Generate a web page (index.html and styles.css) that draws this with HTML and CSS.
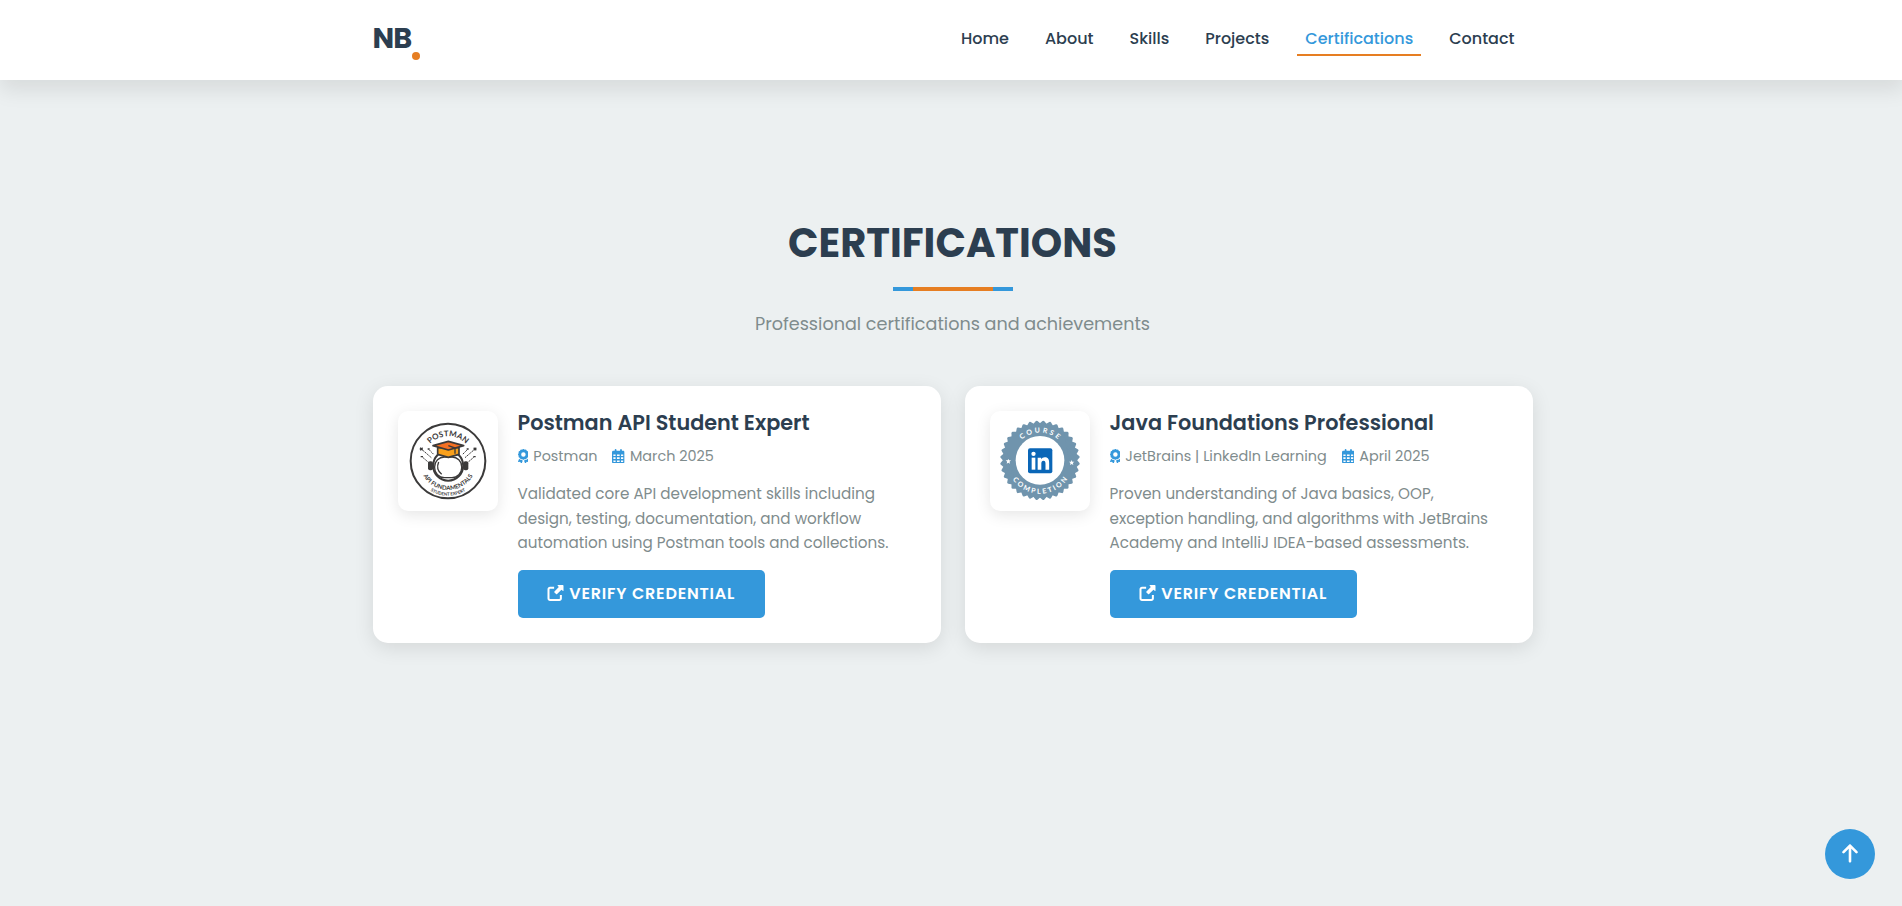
FILE: index.html
```html
<!DOCTYPE html>
<html lang="en">
<head>
<meta charset="utf-8">
<title>Certifications</title>
<link rel="stylesheet" href="styles.css">
</head>
<body>
<svg class="sprite" aria-hidden="true">
  <symbol id="award" viewBox="0 0 384 512"><path d="M173.8 5.5c11-7.3 25.4-7.3 36.4 0L228 17.2c6 3.9 13 5.8 20.1 5.4l21.3-1.3c13.2-.8 25.6 6.4 31.5 18.2l9.6 19.1c3.2 6.4 8.4 11.5 14.7 14.7L344.5 83c11.8 5.9 19 18.3 18.2 31.5l-1.3 21.3c-.4 7.1 1.5 14.2 5.4 20.1l11.8 17.8c7.3 11 7.3 25.4 0 36.4L366.8 228c-3.9 6-5.8 13-5.4 20.1l1.3 21.3c.8 13.2-6.4 25.6-18.2 31.5l-19.1 9.6c-6.4 3.2-11.5 8.4-14.7 14.7L301 344.5c-5.9 11.8-18.3 19-31.5 18.2l-21.3-1.3c-7.1-.4-14.2 1.5-20.1 5.4l-17.8 11.8c-11 7.3-25.4 7.3-36.4 0L156 366.8c-6-3.9-13-5.8-20.1-5.4l-21.3 1.3c-13.2 .8-25.6-6.4-31.5-18.2l-9.6-19.1c-3.2-6.4-8.4-11.5-14.7-14.7L39.5 301c-11.8-5.9-19-18.3-18.2-31.5l1.3-21.3c.4-7.1-1.5-14.2-5.4-20.1L5.5 210.2c-7.3-11-7.3-25.4 0-36.4L17.2 156c3.9-6 5.8-13 5.4-20.1l-1.3-21.3c-.8-13.2 6.4-25.6 18.2-31.5l19.1-9.6C65 70.2 70.2 65 73.4 58.6L83 39.5c5.9-11.8 18.3-19 31.5-18.2l21.3 1.3c7.1 .4 14.2-1.5 20.1-5.4L173.8 5.5zM272 192a80 80 0 1 0 -160 0 80 80 0 1 0 160 0zM1.3 441.8L44.4 339.3c.2 .1 .3 .2 .4 .4l9.6 19.1c11.7 23.2 36 37.3 62 35.8l21.3-1.3c.2 0 .5 0 .7 .2l17.8 11.8c5.1 3.3 10.5 5.9 16.1 7.7l-37.6 89.3c-2.3 5.5-7.4 9.2-13.3 9.7s-11.6-2.2-14.8-7.2L74.4 455.5l-56.1 8.3c-5.7 .8-11.4-1.5-15-6s-4.3-10.7-2.1-16zm248 60.4L211.7 413c5.6-1.8 11-4.3 16.1-7.7l17.8-11.8c.2-.1 .4-.2 .7-.2l21.3 1.3c26 1.5 50.3-12.6 62-35.8l9.6-19.1c.1-.2 .2-.3 .4-.4l43.2 102.5c2.2 5.3 1.4 11.4-2.1 16s-9.3 6.9-15 6l-56.1-8.3-32.2 49.2c-3.2 5-8.9 7.7-14.8 7.2s-11-4.3-13.3-9.7z"/></symbol>
  <symbol id="calendar" viewBox="0 0 448 512"><path fill-rule="evenodd" d="M128 0c17.700 0 32 14.300 32 32v32h128V32c0-17.700 14.300-32 32-32s32 14.300 32 32v32h48c26.500 0 48 21.500 48 48v352c0 26.500-21.500 48-48 48H48c-26.500 0-48-21.500-48-48V112c0-26.500 21.500-48 48-48h48V32c0-17.700 14.300-32 32-32zM48 192v56h80v-56zm128 0v56h96v-56zm144 0v56h80v-56zM48 296v64h80v-64zm128 0v64h96v-64zm144 0v64h80v-64zM48 408v40c0 8.800 7.200 16 16 16h64v-56zm128 0v56h96v-56zm144 0v56h64c8.800 0 16-7.200 16-16v-40z"/></symbol>
  <symbol id="external" viewBox="0 0 512 512"><path d="M320 0c-17 0-24 18-14 30l40 42L190 228c-10 10-10 26 0 36l58 58c10 10 26 10 36 0l156-156 42 40c12 10 30 3 30-14V24c0-13-11-24-24-24z" transform="translate(51 0) scale(.9)"/><path d="M80 56C36 56 0 92 0 132v300c0 44 36 80 80 80h300c44 0 80-36 80-80V320h-64v112c0 9-7 16-16 16H80c-9 0-16-7-16-16V136c0-9 7-16 16-16h132V56z"/></symbol>
  <symbol id="arrow-up" viewBox="0 0 384 512"><path d="M214.600 41.400c-12.500-12.500-32.800-12.500-45.300 0l-160 160c-12.500 12.500-12.500 32.800 0 45.300s32.800 12.500 45.300 0L160 141.200V448c0 17.700 14.300 32 32 32s32-14.300 32-32V141.200l105.400 105.400c12.500 12.500 32.800 12.500 45.300 0s12.500-32.800 0-45.300l-160-160z"/></symbol>
</svg>

<header class="header">
  <div class="container header-row">
    <a class="logo">NB</a>
    <nav class="nav">
      <a class="nav-link">Home</a>
      <a class="nav-link">About</a>
      <a class="nav-link">Skills</a>
      <a class="nav-link">Projects</a>
      <a class="nav-link active">Certifications</a>
      <a class="nav-link">Contact</a>
    </nav>
  </div>
</header>

<main class="container section">
  <h2 class="title">Certifications</h2>
  <div class="rule"></div>
  <p class="subtitle">Professional certifications and achievements</p>

  <div class="cards">
    <article class="card">
      <div class="badge">
        <svg viewBox="0 0 300 300">
          <defs>
            <path id="p-top" d="M75 151a75 75 0 0 1 150 0"/>
            <path id="p-mid" d="M64 151a86 86 0 0 0 172 0"/>
            <path id="p-low" d="M47 151a103 103 0 0 0 206 0"/>
          </defs>
          <circle cx="150" cy="150" r="112" fill="#fff" stroke="#3b3a3a" stroke-width="6"/>
          <g class="badge-text" fill="#3b3a3a" text-anchor="middle">
            <text font-size="24"><textPath href="#p-top" startOffset="50%">POSTMAN</textPath></text>
            <text font-size="18"><textPath href="#p-mid" startOffset="50%">API FUNDAMENTALS</textPath></text>
            <text font-size="13"><textPath href="#p-low" startOffset="50%">STUDENT EXPERT</textPath></text>
          </g>
          <g stroke="#3b3a3a" stroke-width="3" fill="none">
            <path d="M70 114l30 26M93 116l14 14M74 139l22 19M231 114l-30 26M208 116l-14 14M227 139l-22 19" stroke-dasharray="5 2"/>
            <path d="M66 110l8 8M74 110l-8 8M227 110l8 8M235 110l-8 8M68 137h7M226 137h7M89 114h6M206 114h6" stroke-width="4"/>
          </g>
          <rect x="90" y="151" width="15" height="27" rx="6" fill="#3b3a3a"/>
          <rect x="196" y="151" width="15" height="27" rx="6" fill="#3b3a3a"/>
          <circle cx="150.500" cy="164" r="45" fill="#fff" stroke="#3b3a3a" stroke-width="6"/>
          <rect x="110" y="138" width="81" height="62" rx="29" fill="#fff" stroke="#3b3a3a" stroke-width="4"/>
          <path d="M122 153c-6 14-2 28 9 37" fill="none" stroke="#3b3a3a" stroke-width="4"/>
          <path d="M119 110v20l32 9 32-9v-20z" fill="#f9a01b" stroke="#3b3a3a" stroke-width="5" stroke-linejoin="round"/>
          <path d="M105 104l46-13 46 13-46 13z" fill="#f47023" stroke="#3b3a3a" stroke-width="5" stroke-linejoin="round"/>
          <path d="M151 104l20 7v17" fill="none" stroke="#3b3a3a" stroke-width="4"/>
        </svg>
      </div>
      <div class="info">
        <h3 class="name">Postman API Student Expert</h3>
        <div class="meta">
          <span class="meta-item"><svg class="i-award"><use href="#award"/></svg>Postman</span>
          <span class="meta-item"><svg class="i-cal"><use href="#calendar"/></svg>March 2025</span>
        </div>
        <p class="desc">Validated core API development skills including design, testing, documentation, and workflow automation using Postman tools and collections.</p>
        <a class="btn"><svg class="i-ext"><use href="#external"/></svg>Verify Credential</a>
      </div>
    </article>

    <article class="card">
      <div class="badge">
        <svg viewBox="0 0 300 300">
          <defs>
            <path id="c-top" d="M67 148a83 83 0 0 1 166 0"/>
            <path id="c-low" d="M50 148a100 100 0 0 0 200 0"/>
            <rect id="sq" x="64.500" y="62.500" width="171" height="171" rx="4"/>
          </defs>
          <g fill="#7094ad">
            <use href="#sq"/>
            <use href="#sq" transform="rotate(10 150 148)"/>
            <use href="#sq" transform="rotate(20 150 148)"/>
            <use href="#sq" transform="rotate(30 150 148)"/>
            <use href="#sq" transform="rotate(40 150 148)"/>
            <use href="#sq" transform="rotate(50 150 148)"/>
            <use href="#sq" transform="rotate(60 150 148)"/>
            <use href="#sq" transform="rotate(70 150 148)"/>
            <use href="#sq" transform="rotate(80 150 148)"/>
          </g>
          <circle cx="150" cy="148" r="73" fill="#fff"/>
          <g class="seal-text" fill="#fff" text-anchor="middle">
            <text font-size="21" letter-spacing="7"><textPath href="#c-top" startOffset="51%">COURSE</textPath></text>
            <text font-size="21" letter-spacing="6"><textPath href="#c-low" startOffset="51%">COMPLETION</textPath></text>
          </g>
          <path d="M55 143l2 5h6l-4.500 4 1.500 6-5-3-5 3 1.500-6-4.500-4h6zM245 147l2 5h6l-4.500 4 1.500 6-5-3-5 3 1.500-6-4.500-4h6z" fill="#fff"/>
          <rect x="114" y="112" width="73" height="75" rx="6" fill="#0a66b7"/>
          <g fill="#fff">
            <circle cx="130.500" cy="128.500" r="6.500"/>
            <rect x="125" y="140" width="11" height="36"/>
            <path d="M143 140h10.500v5c2-3.500 6-6 11-6 11 0 13 7.500 13 17v20h-11v-18c0-4.500-.5-9-6-9-5.500 0-6.500 4.500-6.500 9v18h-11z"/>
          </g>
        </svg>
      </div>
      <div class="info">
        <h3 class="name">Java Foundations Professional</h3>
        <div class="meta">
          <span class="meta-item"><svg class="i-award"><use href="#award"/></svg>JetBrains | LinkedIn Learning</span>
          <span class="meta-item"><svg class="i-cal"><use href="#calendar"/></svg>April 2025</span>
        </div>
        <p class="desc">Proven understanding of Java basics, OOP, exception handling, and algorithms with JetBrains Academy and IntelliJ IDEA-based assessments.</p>
        <a class="btn"><svg class="i-ext"><use href="#external"/></svg>Verify Credential</a>
      </div>
    </article>
  </div>
</main>

<a class="to-top" aria-label="Back to top"><svg class="i-up"><use href="#arrow-up"/></svg></a>
</body>
</html>
```

FILE: styles.css
```css
* { box-sizing: border-box; margin: 0; padding: 0; }
html { overflow: hidden; background: #ecf0f1; }
body {
  position: relative;
  width: 1905px;
  height: 906px;
  font-family: Poppins, Inter, sans-serif;
  line-height: 1.6;
  color: #2c3e50;
  background: #ecf0f1;
}
svg { display: block; fill: currentColor; flex: none; }
.sprite { display: none; }
.container { width: 1200px; margin: 0 auto; padding: 0 20px; }

.header { height: 80px; background: #fff; box-shadow: 0 10px 20px rgba(0, 0, 0, .09); }
.header-row { display: flex; height: 80px; align-items: center; justify-content: space-between; }
.logo { position: relative; font-size: 28.8px; font-weight: 700; letter-spacing: -1px; line-height: 46px; margin-top: -4px; }
.logo::after {
  content: "";
  position: absolute;
  right: -9px;
  bottom: 1px;
  width: 8px;
  height: 8px;
  border-radius: 50%;
  background: #e67e22;
}
.nav { display: flex; gap: 20px; padding-right: 10px; margin-top: -4px; }
.nav-link { padding: 5.500px 8px 2.500px; font-weight: 500; line-height: 26px; border-bottom: 2px solid transparent; }
.nav-link.active { color: #3498db; border-color: #e67e22; }

.section { padding-top: 131px; }
.title { font-size: 40px; font-weight: 700; line-height: 64px; text-align: center; text-transform: uppercase; }
.rule {
  width: 120px;
  height: 4px;
  margin: 12px auto 0;
  background: linear-gradient(to right, #3498db 20px, #e67e22 20px 100px, #3498db 100px);
}
.subtitle { margin-top: 19px; font-size: 17.6px; line-height: 28px; text-align: center; color: #7f8c8d; }

.cards { display: grid; grid-template-columns: 1fr 1fr; gap: 24px; margin-top: 48px; }
.card {
  display: flex;
  gap: 20px;
  height: 257px;
  padding: 25px;
  border-radius: 15px;
  background: #fff;
  box-shadow: 0 5px 20px rgba(0, 0, 0, .1);
}
.badge { flex: none; width: 100px; height: 100px; border-radius: 10px; background: #fff; box-shadow: 0 4px 15px rgba(0, 0, 0, .1); }
.badge svg { width: 100px; height: 100px; }
.badge-text { font-family: Lato, sans-serif; font-weight: 700; }
.seal-text { font-family: Lato, sans-serif; font-weight: 700; }
.info { flex: 1; display: flex; flex-direction: column; align-items: flex-start; }
.name { font-size: 20.8px; font-weight: 600; line-height: 23px; }
.meta { display: flex; gap: 15px; margin-top: 11px; font-size: 14.4px; line-height: 23px; color: #7f8c8d; }
.meta-item { display: flex; align-items: center; gap: 5px; }
.meta-item svg { color: #3498db; height: 14.4px; margin-top: -1px; }
.i-award { width: 10.800px; }
.i-cal { width: 12.600px; }
.desc { margin-top: 14.300px; font-size: 15.2px; line-height: 24.320px; color: #7f8c8d; }
.btn {
  display: flex;
  align-items: center;
  gap: 5.800px;
  height: 48px;
  margin-top: 14.700px;
  padding: 0 29.600px 0 29px;
  border-radius: 5px;
  background: #3498db;
  color: #fff;
  font-weight: 600;
  letter-spacing: .8px;
  text-transform: uppercase;
}
.i-ext { width: 17px; height: 16px; margin-top: -1px; }

.to-top {
  position: absolute;
  right: 30px;
  bottom: 27px;
  display: flex;
  align-items: center;
  justify-content: center;
  width: 50px;
  height: 50px;
  border-radius: 50%;
  background: #3498db;
  color: #fff;
}
.i-up { width: 16px; height: 20.800px; margin-top: -1px; }
```
